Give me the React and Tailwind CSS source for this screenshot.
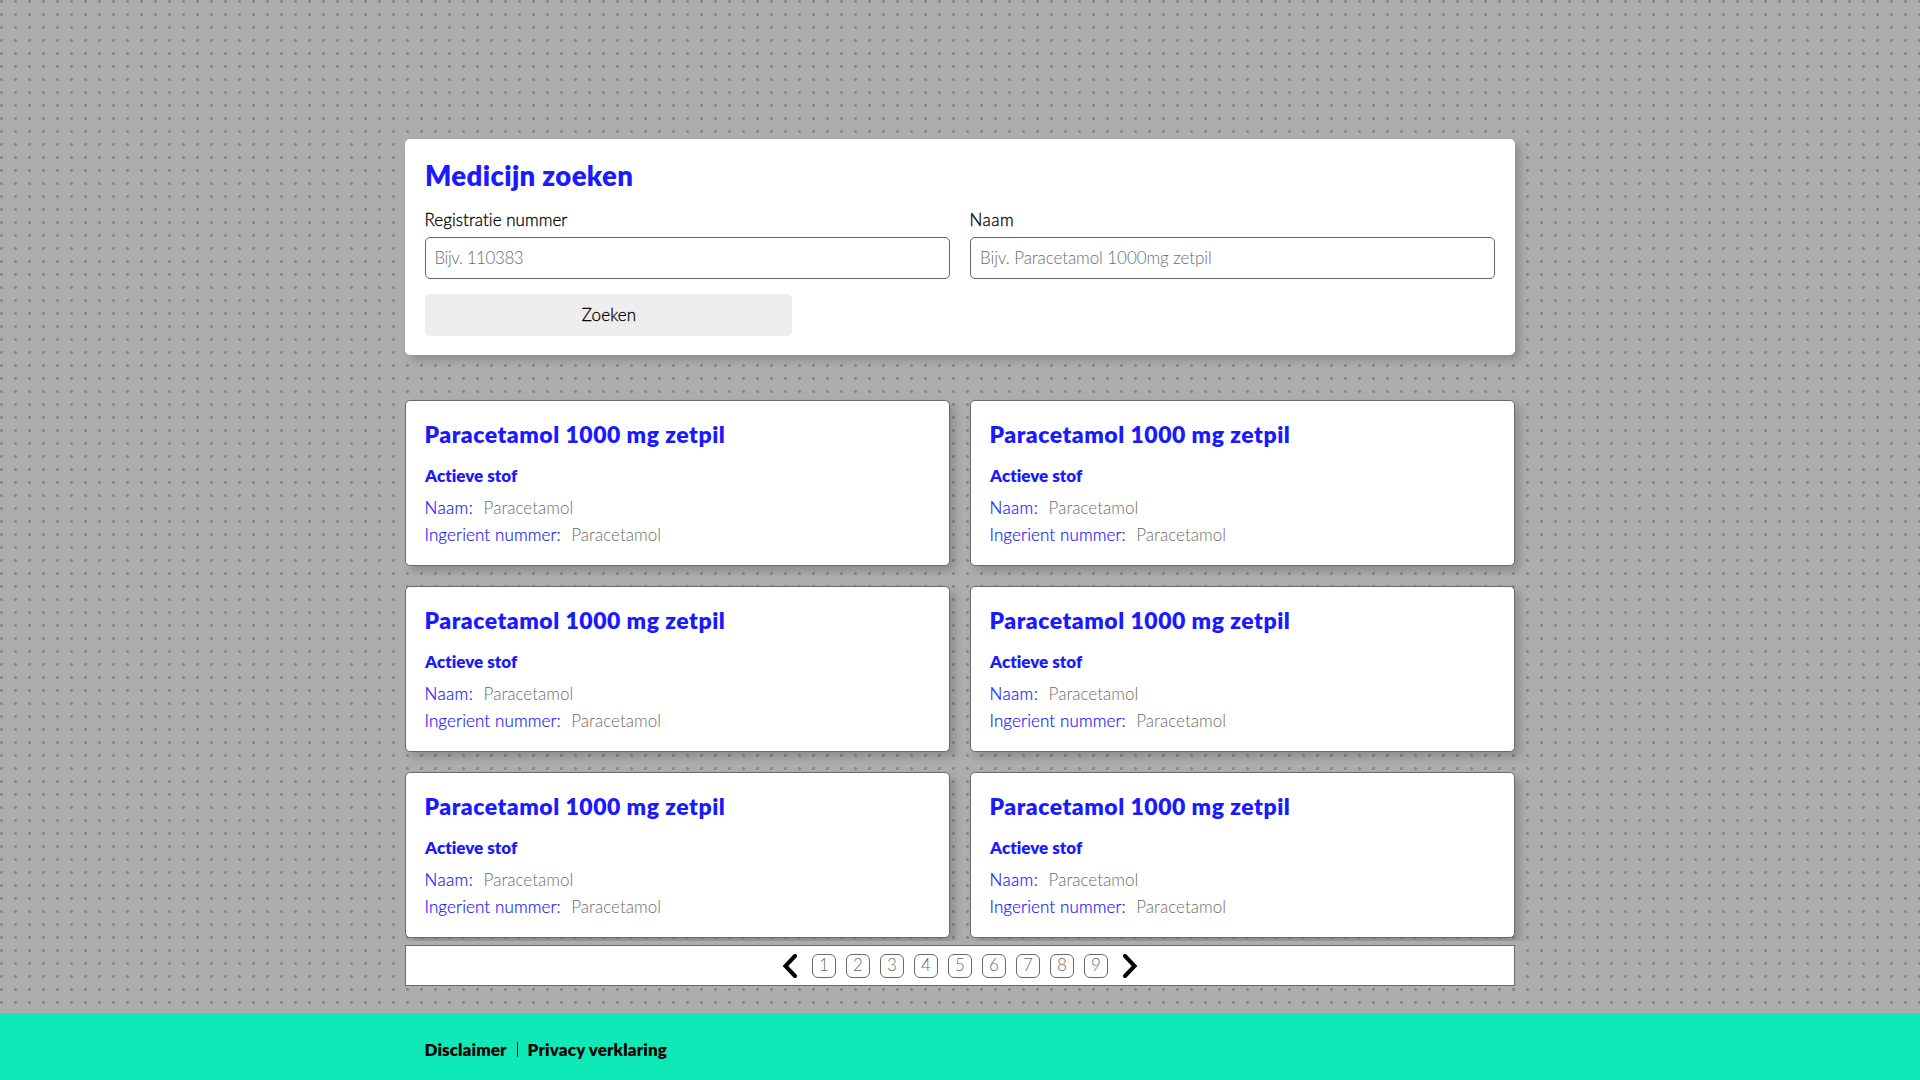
import React from 'react';

const cards = Array.from({ length: 6 }, () => ({
  title: 'Paracetamol 1000 mg zetpil',
  name: 'Paracetamol',
  ingredient: 'Paracetamol',
}));

const pages = [1, 2, 3, 4, 5, 6, 7, 8, 9];

function Field({ label, labelClass, placeholder, inputClass }) {
  return (
    <label className="flex flex-1 flex-col">
      <span className={`h-[19px] leading-[19px] [-webkit-text-stroke:0.3px_#000] ${labelClass}`}>{label}</span>
      <input
        type="text"
        placeholder={placeholder}
        className={`mt-2 h-[42px] w-full rounded-[5px] border border-[#666] bg-white pt-0 pr-2 pb-px leading-[19px] placeholder:text-[#6c6c6c] placeholder:opacity-100 ${inputClass}`}
      />
    </label>
  );
}

function SearchPanel() {
  return (
    <section className="h-[216px] rounded-[5px] bg-white px-5 pt-5 shadow-[5px_5px_8px_rgba(0,0,0,0.19)]">
      <h1 className="h-[33px] text-[27.5px] leading-[33px] font-extrabold tracking-[0.37px] text-[#1a1aff]">
        Medicijn zoeken
      </h1>
      <div className="mt-[18px] flex gap-5">
        <Field
          label="Registratie nummer"
          labelClass="-ml-[0.5px] tracking-[0.04px]"
          placeholder="Bijv. 110383"
          inputClass="pl-[8.5px] tracking-[-0.42px]"
        />
        <Field
          label="Naam"
          labelClass="-ml-[0.5px] tracking-[0.5px]"
          placeholder="Bijv. Paracetamol 1000mg zetpil"
          inputClass="pl-[9px] tracking-[-0.08px]"
        />
      </div>
      <button className="mt-[15px] block h-[42px] w-[367px] rounded-[5px] bg-[#eee] pb-px pl-px leading-[19px] tracking-[0.08px] [-webkit-text-stroke:0.3px_#000]">
        Zoeken
      </button>
    </section>
  );
}

function MedicineCard({ title, name, ingredient }) {
  return (
    <article className="h-[166px] rounded-[5px] border border-[#6a6a6a] bg-white px-[19px] pt-[19px] text-[#1a1aff] shadow-[5px_5px_8px_rgba(0,0,0,0.19)]">
      <h2 className="-ml-[0.5px] text-[23px] leading-[28px] font-extrabold tracking-[0.5px]">{title}</h2>
      <h3 className="mt-[18px] leading-[19px] font-extrabold tracking-[0.02px]">Actieve stof</h3>
      <dl className="mt-[9px] -ml-[0.5px] leading-[27px]">
        <div className="flex gap-[10.5px]">
          <dt className="tracking-[0.37px] [-webkit-text-stroke:0.2px_#1a1aff]">Naam:</dt>
          <dd className="tracking-[0.01px] text-[#6c6c6c]">{name}</dd>
        </div>
        <div className="flex gap-[10.5px]">
          <dt className="tracking-[0.11px] [-webkit-text-stroke:0.2px_#1a1aff]">Ingerient nummer:</dt>
          <dd className="tracking-[0.01px] text-[#6c6c6c]">{ingredient}</dd>
        </div>
      </dl>
    </article>
  );
}

function Arrow({ d, label }) {
  return (
    <button aria-label={label} className="block">
      <svg
        width="16"
        height="24"
        viewBox="0 0 16 24"
        fill="none"
        stroke="#000"
        strokeWidth="4"
        strokeLinecap="round"
        strokeLinejoin="miter"
      >
        <path d={d} />
      </svg>
    </button>
  );
}

function Pagination() {
  return (
    <nav className="mt-1 flex h-[41px] items-center justify-center border border-[#6a6a6a] bg-white">
      <Arrow label="Vorige" d="M13 2 L3.4 12 L13 22" />
      <div className="mx-[14px] flex gap-[10px]">
        {pages.map((page) => (
          <button
            key={page}
            className="h-6 w-6 rounded-[6px] border border-[#6a6a6a] pb-[2px] text-center leading-[19px] text-[#6c6c6c]"
          >
            {page}
          </button>
        ))}
      </div>
      <Arrow label="Volgende" d="M3 2 L12.6 12 L3 22" />
    </nav>
  );
}

function Footer() {
  return (
    <footer className="h-[67px] bg-[#0fe9b8]">
      <div className="mx-auto flex w-[1110px] items-start pt-[27px] pl-[19.5px] leading-[19px] font-extrabold">
        <a className="tracking-[0.1px]">Disclaimer</a>
        <span className="mt-[2px] mr-[10px] ml-[10px] h-[15px] w-px bg-black" />
        <a className="tracking-[0.14px]">Privacy verklaring</a>
      </div>
    </footer>
  );
}

export default function App() {
  return (
    <div
      className="flex h-screen flex-col overflow-hidden bg-[#adadad] bg-[radial-gradient(circle_at_1.5px_1.5px,#848484_0.9px,transparent_2px)] bg-[length:14px_13px] text-[17px] font-light text-black"
      style={{ fontFamily: 'Lato, "Open Sans", sans-serif' }}
    >
      <main className="mx-auto w-[1110px] flex-1 pt-[139px]">
        <SearchPanel />
        <div className="-mx-5 mt-[25px] h-[561px] overflow-hidden px-5 pt-5">
          <div className="grid grid-cols-2 gap-5">
            {cards.map((card, index) => (
              <MedicineCard key={index} {...card} />
            ))}
          </div>
        </div>
        <Pagination />
      </main>
      <Footer />
    </div>
  );
}
